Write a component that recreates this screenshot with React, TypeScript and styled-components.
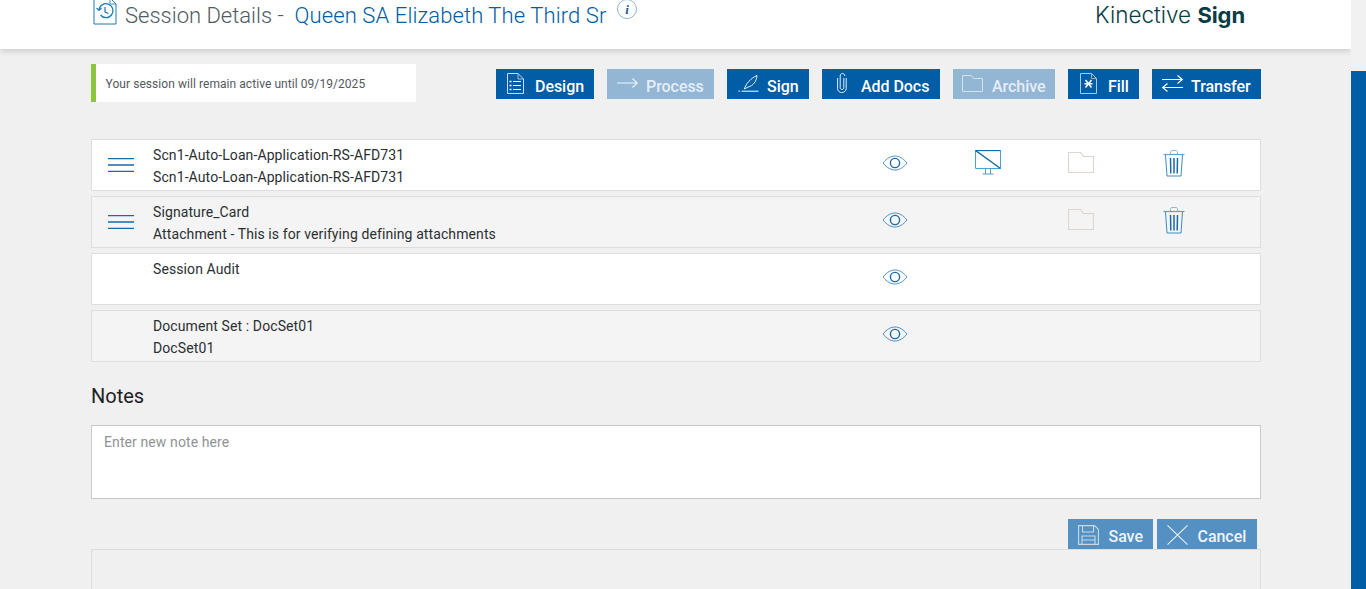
import React from "react";
import styled, { createGlobalStyle } from "styled-components";

const Global = createGlobalStyle`
  html, body { margin: 0; padding: 0; height: 100%; overflow: hidden; background: #f0f0f0; }
  body { font-family: Roboto, "Liberation Sans", sans-serif; }
  * { box-sizing: border-box; }
`;

const Page = styled.div`
  display: grid;
  grid-template-columns: 1351px 15px;
  height: 589px;
  overflow: hidden;
`;
const Main = styled.div`
  display: flex;
  flex-direction: column;
  min-width: 0;
`;
const ScrollTrack = styled.div`
  background: #f1f1f1;
  padding-top: 71px;
  height: 589px;
`;
const ScrollThumb = styled.div`
  background: #005da6;
  height: 100%;
`;
const Header = styled.header`
  height: 49px;
  flex: none;
  background: #fff;
  box-shadow: 0 2px 6px rgba(0, 0, 0, 0.16);
  display: flex;
  justify-content: space-between;
  padding: 0 106px 0 93px;
`;
const TitleGroup = styled.div`
  display: flex;
  align-items: flex-start;
`;
const TitleIcon = styled.svg`
  width: 24px;
  height: 26px;
  margin-top: -1px;
`;
const Title = styled.h1`
  margin: 3px 0 0 8px;
  font-size: 22px;
  line-height: 26px;
  font-weight: 300;
  color: #4f5a63;
  white-space: pre;
`;
const TitleName = styled.span`
  color: #005da6;
  letter-spacing: 0.1px;
`;
const InfoIcon = styled.svg`
  width: 22px;
  height: 22px;
  margin: -2px 0 0 9px;
`;
const Logo = styled.div`
  font-family: Inter, Lato, sans-serif;
  font-size: 22.5px;
  line-height: 26px;
  margin-top: 2px;
  font-weight: 300;
  color: #0b3c44;
`;
const LogoBold = styled.b`
  font-weight: 700;
  font-size: 22px;
  letter-spacing: -0.1px;
`;
const Content = styled.main`
  width: 1170px;
  margin-left: 91px;
  display: flex;
  flex-direction: column;
`;
const Toolbar = styled.div`
  margin-top: 15px;
  height: 38px;
  display: flex;
  justify-content: space-between;
  align-items: flex-start;
`;
const Notice = styled.div`
  width: 325px;
  height: 38px;
  background: #fff;
  border-left: 5px solid #8cc540;
  padding: 2px 0 0 9.5px;
  display: flex;
  align-items: center;
  font-size: 12px;
  letter-spacing: 0.06px;
  color: #54595e;
`;
const Actions = styled.div`
  display: flex;
  gap: 13px;
  padding-top: 5px;
`;
const ActionButton = styled.button<{ $w: number; $dim?: boolean; $gap: number; $pad: number }>`
  width: ${(p) => p.$w}px;
  height: 30px;
  border: 0;
  padding: 0 0 0 ${(p) => p.$pad}px;
  background: ${(p) => (p.$dim ? "#93b6d5" : "#005da6")};
  color: ${(p) => (p.$dim ? "#e6eef5" : "#fff")};
  font: 500 16px/30px Roboto, sans-serif;
  letter-spacing: -0.05px;
  display: flex;
  align-items: flex-start;
  gap: ${(p) => p.$gap}px;
  white-space: nowrap;
`;
const IconSlot = styled.span<{ $top: number }>`
  display: block;
  flex: none;
  line-height: 0;
  padding-top: ${(p) => p.$top}px;
`;
const ButtonLabel = styled.span`
  padding-top: 3px;
`;
const List = styled.div`
  margin-top: 37px;
  display: flex;
  flex-direction: column;
  gap: 5px;
`;
const Row = styled.div<{ $alt?: boolean }>`
  height: 52px;
  background: ${(p) => (p.$alt ? "#f4f4f4" : "#fff")};
  border: 1px solid #dedede;
  display: grid;
  grid-template-columns: 61px 1fr repeat(4, 93px) 40px;
`;
const Handle = styled.div`
  display: flex;
  justify-content: center;
  padding: 18px 3px 0 0;
`;
const RowText = styled.div`
  font-size: 14px;
  line-height: 22px;
  color: #2b2f33;
  padding-top: 4px;
  letter-spacing: 0.1px;
`;
const RowLine = styled.div`
  height: 22px;
`;
const IconCell = styled.div`
  display: flex;
  justify-content: center;
  align-items: flex-start;
  padding-top: 10px;
`;
const NotesTitle = styled.h2`
  margin: 22px 0 0;
  font-size: 20px;
  line-height: 24px;
  font-weight: 400;
  color: #1d2226;
`;
const NoteBox = styled.textarea`
  margin-top: 17px;
  width: 1170px;
  height: 74px;
  display: block;
  resize: none;
  outline: none;
  border: 1px solid #c9c9c9;
  background: #fff;
  padding: 7px 12px;
  font: 400 14px/18px Roboto, sans-serif;
  letter-spacing: 0.1px;
  &::placeholder { color: #8f9396; opacity: 1; }
`;
const FormActions = styled.div`
  margin-top: 20px;
  display: flex;
  justify-content: flex-end;
  gap: 4px;
  padding-right: 4px;
`;
const FormButton = styled.button<{ $w: number }>`
  width: ${(p) => p.$w}px;
  height: 30px;
  border: 0;
  padding: 0 0 0 10px;
  background: #5490c1;
  color: #eef4f9;
  font: 500 16px/30px Roboto, sans-serif;
  letter-spacing: -0.05px;
  display: flex;
  align-items: flex-start;
  gap: 9.5px;
`;
const BottomPanel = styled.div`
  height: 41px;
  border: 1px solid #dcdcdc;
  background: #f0f0f0;
`;

const Bars = () => (
  <svg width="26" height="14" viewBox="0 0 26 14" fill="none" stroke="#1a6aa8" strokeWidth="1.3">
    <path d="M0 .7h26M0 7h26M0 13.300h26" />
  </svg>
);
const Eye = () => (
  <svg width="26" height="18" viewBox="0 0 26 18" style={{ marginTop: 4 }} fill="none" stroke="#1a6aa8">
    <path d="M1 9C5 4 9 2 13 2s8 2 12 7c-4 5-8 7-12 7S5 14 1 9z" strokeWidth="0.9" opacity="0.8" />
    <circle cx="13" cy="9" r="4.6" strokeWidth="1.4" />
  </svg>
);
const Monitor = () => (
  <svg width="26" height="25" viewBox="0 0 26 25" fill="none" stroke="#1a6aa8">
    <path d="M.5.5h25v18H.5z" strokeWidth="1" stroke="#4da3d0" />
    <path d="M.5.5l25 18" strokeWidth="1.5" />
    <path d="M.5.5h25" strokeWidth="1.3" />
    <path d="M10.5 19v5M15.5 19v5M7.5 24h11" strokeWidth="0.9" stroke="#4a90bb" />
  </svg>
);
const Folder = () => (
  <svg width="26" height="21" viewBox="0 0 26 21" style={{ marginTop: 2 }} fill="none" stroke="#dcd5d0">
    <path d="M.5 20.5V.5h12l3 4h10v16z" strokeWidth="1.200" />
  </svg>
);
const Trash = () => (
  <svg width="22" height="27" viewBox="0 0 22 27" fill="none" stroke="#3d8cbf">
    <path d="M.5 4.500h21" strokeWidth="1.200" opacity="0.8" />
    <path d="M7.500 4.500V2c0-.8.700-1.500 1.500-1.500h4c.8 0 1.500.7 1.500 1.500v2.500" strokeWidth="0.8" opacity="0.7" />
    <path d="M2.500 5l1.500 21h14l1.500-21" strokeWidth="1" />
    <path d="M7.500 8l.3 15.500M11 8v15.500M14.500 8l-.3 15.500" strokeWidth="1.500" stroke="#1a6aa8" />
  </svg>
);

const DesignIcon = () => (
  <svg width="17" height="21" viewBox="0 0 17 21" fill="none" stroke="#c4dcee">
    <path d="M.5.5h10.500l5.500 5.500v14.500H.5z" strokeWidth="1" />
    <path d="M11 .5V6h5.500" strokeWidth="0.8" />
    <path d="M6 8.500h8M6 12.500h8M6 16.500h8" strokeWidth="1.200" stroke="#fff" />
    <path d="M2.500 8.500h2M2.500 12.500h2M2.500 16.500h2" strokeWidth="1.400" stroke="#fff" />
  </svg>
);
const ArrowIcon = () => (
  <svg width="21" height="10" viewBox="0 0 21 10" fill="none" stroke="#eef3f8" strokeWidth="1.100">
    <path d="M0 5h20M15.500.5L20.300 5l-4.800 4.500" />
  </svg>
);
const PenIcon = () => (
  <svg width="21" height="17" viewBox="0 0 21 17" fill="none" stroke="#fff">
    <path d="M6.500 14C7.500 9 13 3 19 .5c-.5 6-4 10.500-9 11.500l-3.500 2z" strokeWidth="0.9" />
    <path d="M3.500 16.200h17" strokeWidth="1" />
    <path d="M.5 16.200h1.200" strokeWidth="1.200" />
  </svg>
);
const ClipIcon = () => (
  <svg width="10" height="20" viewBox="0 0 10 20" fill="none" stroke="#e4eff7" strokeWidth="1">
    <path d="M6.800 5v9.500c0 1.300-.7 2-1.800 2s-1.800-.7-1.800-2V3c0-1.500.8-2.500 2.200-2.500S7.800 1.500 7.800 3" />
    <path d="M.6 5v10.500c0 2.500 1.800 4 4.200 4s4.400-1.500 4.400-4V5" />
  </svg>
);
const ArchiveIcon = () => (
  <svg width="21" height="17" viewBox="0 0 21 17" fill="none" stroke="#d4e2ee" strokeWidth="1">
    <path d="M.5 16.500V.5h9l2 3h9v13z" />
  </svg>
);
const FillIcon = () => (
  <svg width="17" height="21" viewBox="0 0 17 21" fill="none" stroke="#a9c9e2">
    <path d="M.5.5h11l5 5v15H.5z" strokeWidth="1" />
    <path d="M11.500.5v5h5" strokeWidth="0.8" />
    <path d="M5.500 7l6 7.500M11.500 7l-6 7.500M4.500 10.800h8" strokeWidth="1.500" stroke="#fff" />
  </svg>
);
const TransferIcon = () => (
  <svg width="21" height="17" viewBox="0 0 21 17" fill="none" stroke="#fff" strokeWidth="1.100">
    <path d="M0 4.500h20M15.500.5l4.800 4-4.800 4" />
    <path d="M21 12.500H1M5.500 8.500l-4.800 4 4.800 4" />
  </svg>
);
const SaveIcon = () => (
  <svg width="21" height="20" viewBox="0 0 21 20" fill="none" stroke="#c6dbeb" strokeWidth="1.100">
    <path d="M.6.6h16l3.800 3.800v15H.6z" />
    <path d="M4.500.6v6.400h11V.6M4 19.400v-8.400h13v8.400M4 15h13" />
  </svg>
);
const CloseIcon = () => (
  <svg width="21" height="20" viewBox="0 0 21 20" fill="none" stroke="#e8f0f7" strokeWidth="1.100">
    <path d="M.5.400l20 19.200M20.500.400l-20 19.200" />
  </svg>
);

const actions = [
  { label: "Design", w: 98, pad: 11, gap: 11, top: 4, icon: <DesignIcon /> },
  { label: "Process", w: 107, pad: 10, gap: 8, top: 9, dim: true, icon: <ArrowIcon /> },
  { label: "Sign", w: 82, pad: 11, gap: 8, top: 6, icon: <PenIcon /> },
  { label: "Add Docs", w: 118, pad: 15, gap: 14, top: 4, icon: <ClipIcon /> },
  { label: "Archive", w: 102, pad: 9, gap: 9, top: 6, dim: true, icon: <ArchiveIcon /> },
  { label: "Fill", w: 71, pad: 12, gap: 11, top: 4, icon: <FillIcon /> },
  { label: "Transfer", w: 109, pad: 10, gap: 8, top: 6, icon: <TransferIcon /> },
];

const rows = [
  { a: "Scn1-Auto-Loan-Application-RS-AFD731", b: "Scn1-Auto-Loan-Application-RS-AFD731", handle: true, monitor: true, tools: true },
  { a: "Signature_Card", b: "Attachment - This is for verifying defining attachments", handle: true, tools: true },
  { a: "Session Audit", b: "" },
  { a: "Document Set : DocSet01", b: "DocSet01" },
];

export default function App() {
  return (
    <Page>
      <Global />
      <Main>
        <Header>
          <TitleGroup>
            <TitleIcon viewBox="0 0 24 26" fill="none" stroke="#1a7ab8">
              <path d="M1 .5v24.500h22V5l-5-5" strokeWidth="1" />
              <path d="M17 0v5h6" strokeWidth="0.8" />
              <path d="M6 11a7 7 0 1 1 1.500 5" strokeWidth="1.300" />
              <path d="M3.500 9l2.500 2.500L8.500 9" strokeWidth="1.100" />
              <path d="M12 8v5l3.500 1.500" strokeWidth="1.200" />
            </TitleIcon>
            <Title>
              Session Details -  <TitleName>Queen SA Elizabeth The Third Sr</TitleName>
            </Title>
            <InfoIcon viewBox="0 0 22 22" fill="none">
              <circle cx="11" cy="11" r="9.500" stroke="#8fb4cf" strokeWidth="1" />
              <text x="11" y="15.500" textAnchor="middle" fontFamily="Liberation Serif, serif" fontStyle="italic" fontWeight="700" fontSize="13" fill="#1d5c8c">i</text>
            </InfoIcon>
          </TitleGroup>
          <Logo>
            Kinective <LogoBold>Sign</LogoBold>
          </Logo>
        </Header>
        <Content>
          <Toolbar>
            <Notice>Your session will remain active until 09/19/2025</Notice>
            <Actions>
              {actions.map((a) => (
                <ActionButton key={a.label} $w={a.w} $pad={a.pad} $gap={a.gap} $dim={a.dim}>
                  <IconSlot $top={a.top}>{a.icon}</IconSlot>
                  <ButtonLabel>{a.label}</ButtonLabel>
                </ActionButton>
              ))}
            </Actions>
          </Toolbar>
          <List>
            {rows.map((r, i) => (
              <Row key={r.a} $alt={i % 2 === 1}>
                <Handle>{r.handle && <Bars />}</Handle>
                <RowText>
                  <RowLine>{r.a}</RowLine>
                  <RowLine>{r.b}</RowLine>
                </RowText>
                <IconCell>
                  <Eye />
                </IconCell>
                <IconCell>{r.monitor && <Monitor />}</IconCell>
                <IconCell>{r.tools && <Folder />}</IconCell>
                <IconCell>{r.tools && <Trash />}</IconCell>
                <div />
              </Row>
            ))}
          </List>
          <NotesTitle>Notes</NotesTitle>
          <NoteBox placeholder="Enter new note here" />
          <FormActions>
            <FormButton $w={85}>
              <IconSlot $top={6}><SaveIcon /></IconSlot>
              <ButtonLabel>Save</ButtonLabel>
            </FormButton>
            <FormButton $w={100}>
              <IconSlot $top={6}><CloseIcon /></IconSlot>
              <ButtonLabel>Cancel</ButtonLabel>
            </FormButton>
          </FormActions>
          <BottomPanel />
        </Content>
      </Main>
      <ScrollTrack>
        <ScrollThumb />
      </ScrollTrack>
    </Page>
  );
}
